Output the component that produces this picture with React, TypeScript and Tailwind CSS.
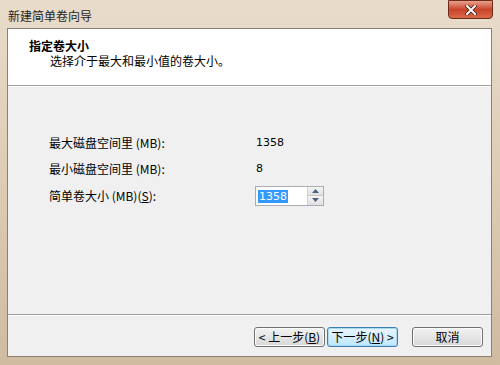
import React from 'react';

const cjk = { fontFamily: '"SimSun", "Noto Sans CJK SC", sans-serif' };

const WizardButton: React.FC<{ children: React.ReactNode; focused?: boolean }> = ({ children, focused }) => {
  return <div className={`w-[71px] h-[20px] rounded-[3px] border flex items-center justify-center text-[12px] text-black ${focused ? 'border-[#3c7fb1] bg-gradient-to-b from-[#eaf6fd] to-[#bee6fd] shadow-[inset_0_0_0_1px_#a7d9f5]' : 'border-[#707070] bg-gradient-to-b from-[#f2f2f2] to-[#d8d8d8] shadow-[inset_0_0_0_1px_#fbfbfb]'}`}>
      {children}
    </div>;
};

const App: React.FC = () => {
  return <div className="w-[500px] h-[365px] overflow-hidden bg-gradient-to-b from-[#e9dccb] via-[#ddcbb3] to-[#cfbba0] flex flex-col pl-[7px] pr-[8px] pb-[8px]" style={cjk}>
      {/* title bar */}
      <div className="h-[28px] flex items-start justify-between">
        <div className="pt-[7px] pl-[1px] text-[12px] text-[#1e1e1e]">新建简单卷向导</div>
        <div className="w-[45px] h-[19px] mr-[-1px] rounded-b-[4px] border border-[#6b2a1c] bg-gradient-to-b from-[#e8a08c] via-[#c8432a] to-[#d86a4a] flex items-center justify-center">
          <svg width="12" height="10" viewBox="0 0 12 10">
            <path d="M2 1 L10 9 M10 1 L2 9" stroke="#3a1a12" strokeWidth="3.4" strokeLinecap="square" />
            <path d="M2 1 L10 9 M10 1 L2 9" stroke="#ffffff" strokeWidth="2" strokeLinecap="square" />
          </svg>
        </div>
      </div>

      {/* client area */}
      <div className="flex-1 flex flex-col border border-[#8c8070] bg-[#f0f0f0]">
        <div className="h-[57px] bg-white border-b border-[#a0a0a0] pl-[21px] pt-[9px]">
          <div className="text-[12px] font-bold text-black leading-[15px]">指定卷大小</div>
          <div className="text-[12px] text-black leading-[15px] pl-[21px]">选择介于最大和最小值的卷大小。</div>
        </div>
        <div className="h-px bg-white" />

        <div className="flex-1 pl-[41px] pt-[43px]">
          <div className="flex items-center h-[26px] text-[12px] text-black">
            <div className="w-[207px]">最大磁盘空间里 (MB):</div>
            <div style={{ fontFamily: '"DejaVu Sans", sans-serif', fontSize: '11px' }}>1358</div>
          </div>
          <div className="flex items-center h-[26px] text-[12px] text-black">
            <div className="w-[207px]">最小磁盘空间里 (MB):</div>
            <div style={{ fontFamily: '"DejaVu Sans", sans-serif', fontSize: '11px' }}>8</div>
          </div>
          <div className="flex items-center h-[27px] text-[12px] text-black">
            <div className="w-[206px]">简单卷大小 (MB)(<span className="underline">S</span>):</div>
            <div className="w-[69px] h-[20px] border border-[#abadb3] bg-white flex items-center">
              <div className="flex-1 pl-[2px]">
                <span className="bg-[#3399ff] text-white px-[1px]" style={{ fontFamily: '"DejaVu Sans", sans-serif', fontSize: '11px' }}>1358</span>
              </div>
              <div className="w-[16px] h-full flex flex-col border-l border-[#d0d0d0]">
                <div className="flex-1 flex items-center justify-center bg-gradient-to-b from-[#f6f6f6] to-[#e0e0e0] border-b border-[#c8c8c8]">
                  <svg width="7" height="4" viewBox="0 0 7 4"><path d="M3.5 0 L7 4 L0 4 Z" fill="#4d6185" /></svg>
                </div>
                <div className="flex-1 flex items-center justify-center bg-gradient-to-b from-[#f6f6f6] to-[#e0e0e0]">
                  <svg width="7" height="4" viewBox="0 0 7 4"><path d="M0 0 L7 0 L3.5 4 Z" fill="#4d6185" /></svg>
                </div>
              </div>
            </div>
          </div>
        </div>

        <div className="h-px bg-[#a0a0a0]" />
        <div className="h-px bg-white" />
        <div className="h-[40px] flex items-start pt-[11px] pl-[246px] gap-[2px]">
          <WizardButton>&lt; 上一步(<span className="underline">B</span>)</WizardButton>
          <WizardButton focused>下一步(<span className="underline">N</span>) &gt;</WizardButton>
          <div className="w-[10px]" />
          <WizardButton>取消</WizardButton>
        </div>
      </div>
    </div>;
};

export default App;
